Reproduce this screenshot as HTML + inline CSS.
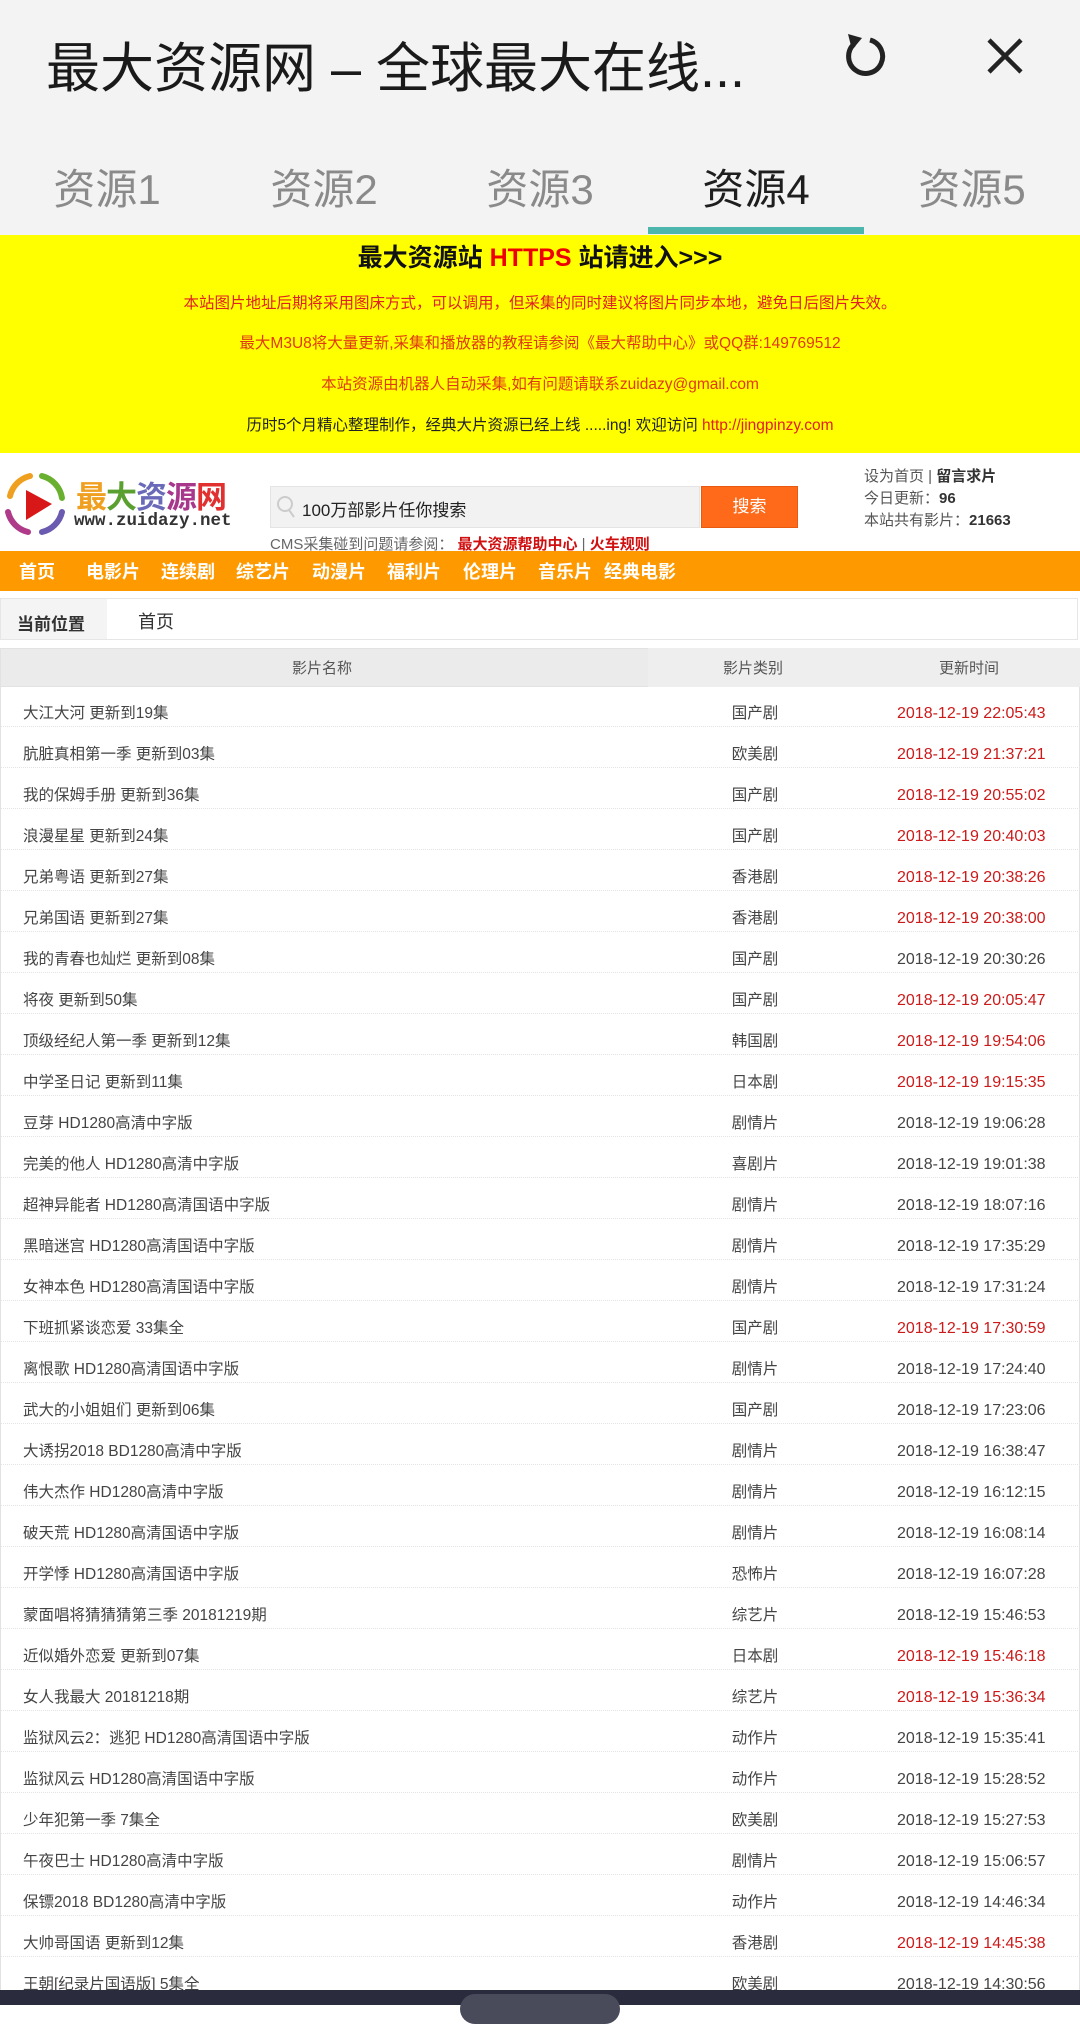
<!DOCTYPE html>
<html><head><meta charset="utf-8"><style>
*{margin:0;padding:0;box-sizing:border-box}
body{width:1080px;height:2005px;overflow:hidden;background:#fff;font-family:"Liberation Sans","Noto Sans CJK SC",sans-serif;position:relative}
.a{position:absolute;white-space:nowrap}
#top{position:absolute;left:0;top:0;width:1080px;height:235px;background:#f3f3f3}
.tab{position:absolute;top:156px;font-size:42px;color:#8a8a8a;width:170px;text-align:center}
#yel{position:absolute;left:0;top:235px;width:1080px;height:218px;background:#ffff00;text-align:center}
#yel div{position:absolute;left:0;width:1080px;font-size:15.5px;color:#e02020}
#nav{position:absolute;left:0;top:551px;width:1080px;height:40px;background:#ff9900}
#nav span{position:absolute;top:7px;font-size:18px;color:#fff;font-weight:bold}
.row{position:absolute;left:0;width:1080px;height:41px;border-bottom:1px dotted #e4e4e4;font-size:15.5px;color:#444;line-height:40px}
.row span{position:absolute;top:8px}
.row .n{left:23px}
.row .t{left:715px;width:80px;text-align:center}
.row .d{left:897px;font-size:16px}
.r{color:#cc1a1a}
</style></head><body>
<div id="top">
<div class="a" style="left:46px;top:24px;font-size:54px;color:#1a1a1a">最大资源网 – 全球最大在线...</div>
<svg class="a" style="left:840px;top:30px" width="50" height="54" viewBox="0 0 50 54"><path d="M14 14 A17 17 0 1 0 30 10" fill="none" stroke="#222" stroke-width="5"/><path d="M8 4 L22 8 L12 20 Z" fill="#222"/></svg>
<svg class="a" style="left:985px;top:36px" width="40" height="40" viewBox="0 0 40 40"><path d="M4 4L36 36M36 4L4 36" stroke="#222" stroke-width="4.5"/></svg>
<div class="tab" style="left:22px">资源1</div>
<div class="tab" style="left:239px">资源2</div>
<div class="tab" style="left:455px">资源3</div>
<div class="tab" style="left:671px;color:#1e1e1e">资源4</div>
<div class="tab" style="left:887px">资源5</div>
<div class="a" style="left:648px;top:227px;width:216px;height:7px;background:#4db6ac"></div>
</div>
<div id="yel">
<div style="top:3px;font-size:25px;font-weight:bold;color:#111">最大资源站 <span style="color:#e00">HTTPS</span> 站请进入&gt;&gt;&gt;</div>
<div style="top:56px">本站图片地址后期将采用图床方式，可以调用，但采集的同时建议将图片同步本地，避免日后图片失效。</div>
<div style="top:96px;color:#e03a10">最大M3U8将大量更新,采集和播放器的教程请参阅《最大帮助中心》或QQ群:149769512</div>
<div style="top:137px;color:#e03a10">本站资源由机器人自动采集,如有问题请联系zuidazy@gmail.com</div>
<div style="top:178px;color:#222">历时5个月精心整理制作，经典大片资源已经上线 .....ing! 欢迎访问 <span style="color:#e02020">http://jingpinzy.com</span></div>
</div>
<svg class="a" style="left:2px;top:470px" width="66" height="68" viewBox="0 0 66 68"><path d="M8 26 A27 27 0 0 1 28 6" fill="none" stroke="#f0a020" stroke-width="6" stroke-linecap="round"/><path d="M40 6 A27 27 0 0 1 60 28" fill="none" stroke="#6ab030" stroke-width="6" stroke-linecap="round"/><path d="M60 42 A27 27 0 0 1 40 62" fill="none" stroke="#6a5ab0" stroke-width="6" stroke-linecap="round"/><path d="M26 62 A27 27 0 0 1 6 42" fill="none" stroke="#b03a8a" stroke-width="6" stroke-linecap="round"/><path d="M24 20 L50 34 L24 50 Z" fill="#d81818"/></svg>
<div class="a" style="left:76px;top:472px;font-size:31px;font-weight:bold;letter-spacing:-1px"><span style="color:#f0a020">最</span><span style="color:#5aa030">大</span><span style="color:#6a6ab8">资</span><span style="color:#a8388c">源</span><span style="color:#e03030">网</span></div>
<div class="a" style="left:74px;top:511px;font-size:17.5px;font-weight:bold;color:#333;font-family:'Liberation Mono',monospace">www.zuidazy.net</div>
<div class="a" style="left:270px;top:486px;width:430px;height:42px;background:#f2f2f2;border:1px solid #e4e4e4"></div>
<svg class="a" style="left:276px;top:495px" width="20" height="24" viewBox="0 0 20 24"><circle cx="9" cy="9" r="7" fill="none" stroke="#ccc" stroke-width="2"/><path d="M13 15L18 22" stroke="#ccc" stroke-width="2"/></svg>
<div class="a" style="left:302px;top:496px;font-size:17px;color:#222">100万部影片任你搜索</div>
<div class="a" style="left:701px;top:486px;width:97px;height:42px;background:#ff6a1a;border:1px solid #e85a10;color:#fff;font-size:17px;text-align:center;line-height:40px">搜索</div>
<div class="a" style="left:270px;top:533px;font-size:15px;color:#666">CMS采集碰到问题请参阅：<b style="color:#d01010"> 最大资源帮助中心</b> | <b style="color:#d01010">火车规则</b></div>
<div class="a" style="left:864px;top:465px;font-size:15px;color:#555">设为首页 | <b style="color:#333">留言求片</b></div>
<div class="a" style="left:864px;top:487px;font-size:15px;color:#555">今日更新：<b style="color:#333">96</b></div>
<div class="a" style="left:864px;top:509px;font-size:15px;color:#555">本站共有影片：<b style="color:#333">21663</b></div>
<div id="nav"><span style="left:19px">首页</span><span style="left:86px">电影片</span><span style="left:161px">连续剧</span><span style="left:236px">综艺片</span><span style="left:312px">动漫片</span><span style="left:387px">福利片</span><span style="left:463px">伦理片</span><span style="left:538px">音乐片</span><span style="left:604px">经典电影</span></div>
<div class="a" style="left:0;top:598px;width:1078px;height:42px;border:1px solid #e6e6e6"></div>
<div class="a" style="left:1px;top:599px;width:106px;height:40px;background:#f4f4f4"></div>
<div class="a" style="left:17px;top:604px;line-height:42px;font-size:17px;color:#333;font-weight:bold">当前位置</div>
<div class="a" style="left:138px;top:601px;line-height:42px;font-size:18px;color:#333">首页</div>
<div class="a" style="left:0;top:648px;width:1080px;height:39px;background:#ebebeb;border:1px solid #e2e2e2"></div>
<div class="a" style="left:648px;top:648px;width:432px;height:39px;background:#eeeeee"></div>
<div class="a" style="left:292px;top:657px;font-size:15px;color:#555">影片名称</div>
<div class="a" style="left:723px;top:657px;font-size:15px;color:#555">影片类别</div>
<div class="a" style="left:939px;top:657px;font-size:15px;color:#555">更新时间</div>
<div class="a" style="left:0;top:687px;width:1080px;height:1303px;border-left:1px solid #e2e2e2;border-right:1px solid #e2e2e2"></div>
<div class="row" style="top:686px"><span class="n">大江大河 更新到19集</span><span class="t">国产剧</span><span class="d r">2018-12-19 22:05:43</span></div>
<div class="row" style="top:727px"><span class="n">肮脏真相第一季 更新到03集</span><span class="t">欧美剧</span><span class="d r">2018-12-19 21:37:21</span></div>
<div class="row" style="top:768px"><span class="n">我的保姆手册 更新到36集</span><span class="t">国产剧</span><span class="d r">2018-12-19 20:55:02</span></div>
<div class="row" style="top:809px"><span class="n">浪漫星星 更新到24集</span><span class="t">国产剧</span><span class="d r">2018-12-19 20:40:03</span></div>
<div class="row" style="top:850px"><span class="n">兄弟粤语 更新到27集</span><span class="t">香港剧</span><span class="d r">2018-12-19 20:38:26</span></div>
<div class="row" style="top:891px"><span class="n">兄弟国语 更新到27集</span><span class="t">香港剧</span><span class="d r">2018-12-19 20:38:00</span></div>
<div class="row" style="top:932px"><span class="n">我的青春也灿烂 更新到08集</span><span class="t">国产剧</span><span class="d">2018-12-19 20:30:26</span></div>
<div class="row" style="top:973px"><span class="n">将夜 更新到50集</span><span class="t">国产剧</span><span class="d r">2018-12-19 20:05:47</span></div>
<div class="row" style="top:1014px"><span class="n">顶级经纪人第一季 更新到12集</span><span class="t">韩国剧</span><span class="d r">2018-12-19 19:54:06</span></div>
<div class="row" style="top:1055px"><span class="n">中学圣日记 更新到11集</span><span class="t">日本剧</span><span class="d r">2018-12-19 19:15:35</span></div>
<div class="row" style="top:1096px"><span class="n">豆芽 HD1280高清中字版</span><span class="t">剧情片</span><span class="d">2018-12-19 19:06:28</span></div>
<div class="row" style="top:1137px"><span class="n">完美的他人 HD1280高清中字版</span><span class="t">喜剧片</span><span class="d">2018-12-19 19:01:38</span></div>
<div class="row" style="top:1178px"><span class="n">超神异能者 HD1280高清国语中字版</span><span class="t">剧情片</span><span class="d">2018-12-19 18:07:16</span></div>
<div class="row" style="top:1219px"><span class="n">黑暗迷宫 HD1280高清国语中字版</span><span class="t">剧情片</span><span class="d">2018-12-19 17:35:29</span></div>
<div class="row" style="top:1260px"><span class="n">女神本色 HD1280高清国语中字版</span><span class="t">剧情片</span><span class="d">2018-12-19 17:31:24</span></div>
<div class="row" style="top:1301px"><span class="n">下班抓紧谈恋爱 33集全</span><span class="t">国产剧</span><span class="d r">2018-12-19 17:30:59</span></div>
<div class="row" style="top:1342px"><span class="n">离恨歌 HD1280高清国语中字版</span><span class="t">剧情片</span><span class="d">2018-12-19 17:24:40</span></div>
<div class="row" style="top:1383px"><span class="n">武大的小姐姐们 更新到06集</span><span class="t">国产剧</span><span class="d">2018-12-19 17:23:06</span></div>
<div class="row" style="top:1424px"><span class="n">大诱拐2018 BD1280高清中字版</span><span class="t">剧情片</span><span class="d">2018-12-19 16:38:47</span></div>
<div class="row" style="top:1465px"><span class="n">伟大杰作 HD1280高清中字版</span><span class="t">剧情片</span><span class="d">2018-12-19 16:12:15</span></div>
<div class="row" style="top:1506px"><span class="n">破天荒 HD1280高清国语中字版</span><span class="t">剧情片</span><span class="d">2018-12-19 16:08:14</span></div>
<div class="row" style="top:1547px"><span class="n">开学悸 HD1280高清国语中字版</span><span class="t">恐怖片</span><span class="d">2018-12-19 16:07:28</span></div>
<div class="row" style="top:1588px"><span class="n">蒙面唱将猜猜猜第三季 20181219期</span><span class="t">综艺片</span><span class="d">2018-12-19 15:46:53</span></div>
<div class="row" style="top:1629px"><span class="n">近似婚外恋爱 更新到07集</span><span class="t">日本剧</span><span class="d r">2018-12-19 15:46:18</span></div>
<div class="row" style="top:1670px"><span class="n">女人我最大 20181218期</span><span class="t">综艺片</span><span class="d r">2018-12-19 15:36:34</span></div>
<div class="row" style="top:1711px"><span class="n">监狱风云2：逃犯 HD1280高清国语中字版</span><span class="t">动作片</span><span class="d">2018-12-19 15:35:41</span></div>
<div class="row" style="top:1752px"><span class="n">监狱风云 HD1280高清国语中字版</span><span class="t">动作片</span><span class="d">2018-12-19 15:28:52</span></div>
<div class="row" style="top:1793px"><span class="n">少年犯第一季 7集全</span><span class="t">欧美剧</span><span class="d">2018-12-19 15:27:53</span></div>
<div class="row" style="top:1834px"><span class="n">午夜巴士 HD1280高清中字版</span><span class="t">剧情片</span><span class="d">2018-12-19 15:06:57</span></div>
<div class="row" style="top:1875px"><span class="n">保镖2018 BD1280高清中字版</span><span class="t">动作片</span><span class="d">2018-12-19 14:46:34</span></div>
<div class="row" style="top:1916px"><span class="n">大帅哥国语 更新到12集</span><span class="t">香港剧</span><span class="d r">2018-12-19 14:45:38</span></div>
<div class="row" style="top:1957px;border-bottom:none"><span class="n">王朝[纪录片国语版] 5集全</span><span class="t">欧美剧</span><span class="d">2018-12-19 14:30:56</span></div>
<div class="a" style="left:0;top:1990px;width:1080px;height:15px;background:#2a2b3d"></div>
<div class="a" style="left:460px;top:1994px;width:160px;height:30px;border-radius:15px;background:#4a4b5a"></div>
</body></html>
